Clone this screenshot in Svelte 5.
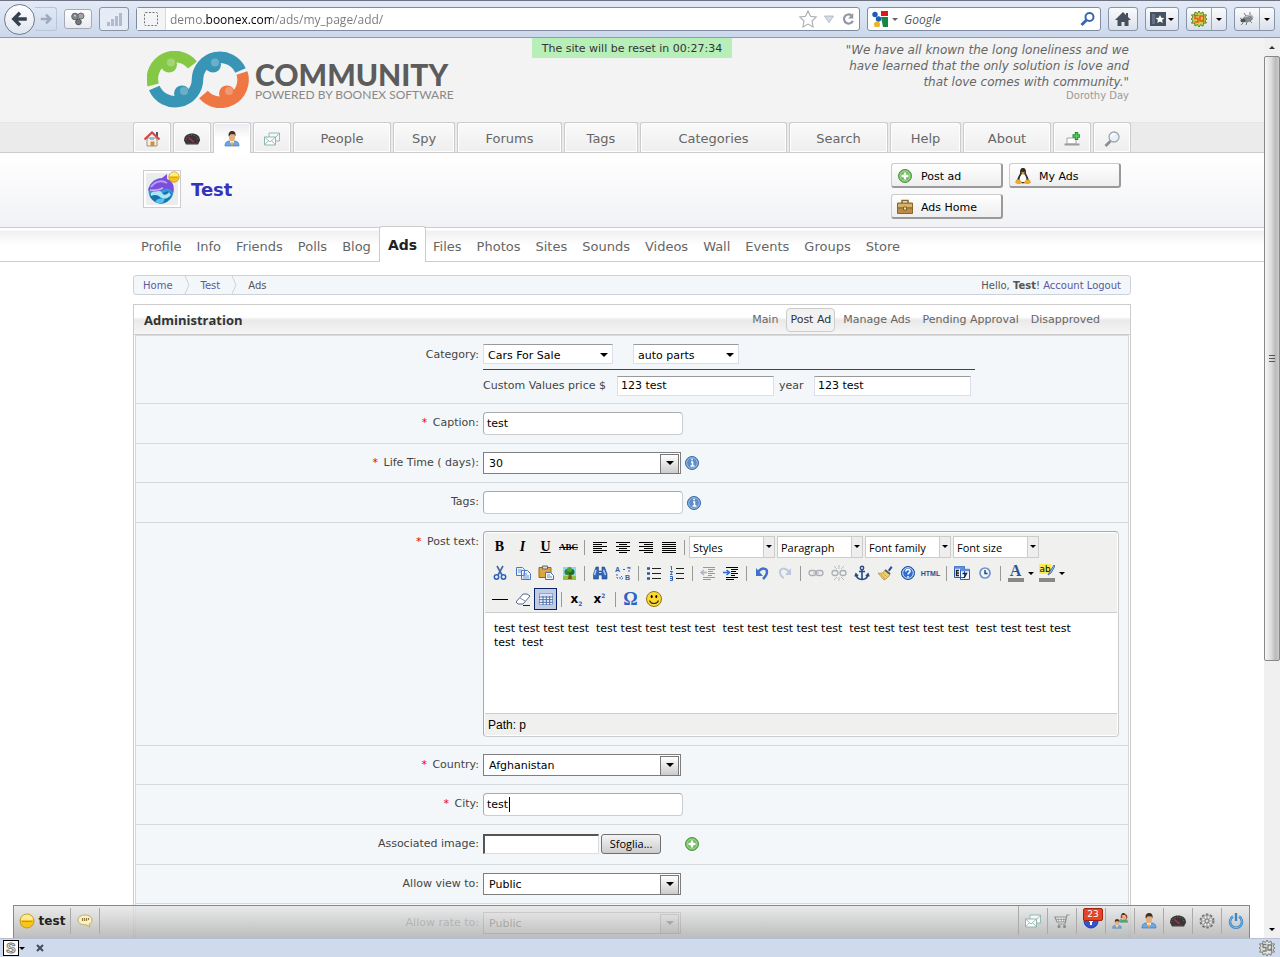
<script>
    const person = '<path d="M1 15c0-4 2-5 5-5h4c3 0 5 1 5 5z" fill="#6ea6e0" stroke="#4478b8" stroke-width=".7"/><path d="M6 9h4v2l-2 3-2-3z" fill="#fff"/><path d="M5 4v3c0 2 1.300 3.500 3 3.500S11 9 11 7V4z" fill="#e8ae79"/><path d="M4.700 5.500C4 1.500 6 0 8.200 0s4 1.500 3.200 5.500L10.500 3.500h-4z" fill="#4a2f1c"/><path d="M7.500 11h1l.5 3.500h-2z" fill="#e99a2c"/>';
    const mails = '<path d="M5 2h10.500v8H5z" fill="#f4faf9" stroke="#98b8b4"/><path d="M.5 6h11v8H.5z" fill="#fff" stroke="#8fb5b0"/><path d="M.5 6 6 11l5.500-5M.5 14l4-4.500m7 4.500-4-4.500M12 6l3.500-4" fill="none" stroke="#8fb5b0" stroke-width=".9"/>';
    const gauge = '<path d="M0 9.500C0 5 3.500 2.500 8 2.500S16 5 16 9.500L14 13.500H2z" fill="#3a3638"/><path d="M2 9a6 5 0 0 1 12 0" fill="none" stroke="#77787c" stroke-width="1" stroke-dasharray="1 1.500"/><path d="m4.500 6.500 5 4.500" stroke="#d02945" stroke-width="1.300"/><path d="M3 12.500h10" stroke="#68363f"/>';
    const add = '<circle cx="8" cy="8" r="6.500" fill="#69b956" stroke="#4f9246"/><circle cx="8" cy="8" r="5" fill="none" stroke="#a9dc9c"/><path d="M8 4.500v7M4.500 8h7" stroke="#fff" stroke-width="2.400"/>';
    const smile = '<circle cx="8" cy="8" r="7" fill="#f5c51e" stroke="#bd8a12" stroke-width=".8"/><path d="M2 7a6 5.500 0 0 1 12 0z" fill="#ffeb94"/><path d="M3 8.500h10" stroke="#ce9412"/>';
    const lines = (rows) => rows.map(([x, w], i) => `<path d="M${x} ${3 + i * 2}.500h${w}" stroke="#000"/>`).join('');
    const badge = '<path d="m8 0 1.500 2.500L12 1l.5 3 3-.2L14 6.500l2 1.500-2 1.500 1.500 2.500-3 .2-.5 3-2.500-1.500L8 16l-1.500-2.500L4 15l-.5-3-3 .2L2 9.500 0 8l2-1.500L.5 3.800l3 .2L4 1l2.500 1.500z"';

    const icons = {
        person, mails, gauge, add, smile,
        back: '<path d="M14 8H3M8 2.500 2.500 8 8 13.500" fill="none" stroke="#35414f" stroke-width="3"/>',
        forward: '<path d="M2 8h10M8 3l5 5-5 5" fill="none" stroke="#9fabbc" stroke-width="3"/>',
        dots: '<circle cx="5" cy="5.500" r="3.300" fill="#85898d" stroke="#5c5f63"/><circle cx="11" cy="5" r="3" fill="#a2a5a8" stroke="#6a6d70"/><circle cx="8.500" cy="11" r="2.800" fill="#77797c" stroke="#515356"/><path d="m4 4.500 2 .5" stroke="#ddd"/>',
        bars: '<path d="M2.500 15v-4M6.500 15V8M10.500 15V5M14.500 15V2" stroke="#aebbd0" stroke-width="3"/>',
        site: '<rect x="1.500" y="1.500" width="13" height="13" rx="1" fill="none" stroke="#70747b" stroke-dasharray="2 1.500"/>',
        star: '<path d="m8 .8 2.200 4.700 5.100.7-3.700 3.600.9 5.200L8 12.500 3.500 15l.9-5.200L.7 6.200l5.100-.7z" fill="#fff" stroke="#aaadb3"/>',
        drop: '<path d="M2 4h12L8 13z" fill="#d6dce6" stroke="#a5aebb"/>',
        reload: '<path d="M12 4a5.200 5.200 0 1 0 1.500 6" fill="none" stroke="#9299a5" stroke-width="2.500"/><path d="M14 1v6.500H8z" fill="#9299a5"/>',
        google: '<path d="M0 0h16v16H0z" fill="#fff"/><path d="M9 0h7v5H9z" fill="#dc1a1c"/><path d="M9 6h7v10h-5z" fill="#138a3e"/><circle cx="3" cy="3.500" r="2.700" fill="#1d5cb9"/><circle cx="6.500" cy="8" r="2.700" fill="#1d5cb9"/><circle cx="5" cy="13.500" r="3" fill="#edb523"/>',
        find: '<circle cx="9.500" cy="6" r="4" fill="none" stroke="#3a68ad" stroke-width="2"/><path d="m6.500 9-5 5" stroke="#3a68ad" stroke-width="3"/>',
        homeDark: '<path d="M8 1 0 9h2.500v6h4v-4h3v4h4V9H16l-3-3V2h-2v2z" fill="#47505d"/>',
        bookmark: '<path d="M0 1h16v14H0z" fill="#465363"/><path d="M2 3h3v10H2z" fill="#637183"/><path d="m10 4 1.300 2.700 3 .4-2.200 2 .6 3-2.700-1.500-2.700 1.500.6-3-2.200-2 3-.4z" fill="#fff"/>',
        sq: badge + ' fill="#c8d44e" stroke="#4f8a22"/><path d="M7.500 4.500H4v3h3v3.500H3.500M9 5h3.500v5H9zM11 9l2 2.500" fill="none" stroke="#e2571c" stroke-width="1.500"/>',
        sqGrey: badge + ' fill="#e3e5e0" stroke="#7b7f7a"/><path d="M7.500 4.500H4v3h3v3.500H3.500M9 5h3.500v5H9zM11 9l2 2.500" fill="none" stroke="#777b76" stroke-width="1.300"/>',
        bug: '<ellipse cx="9" cy="7.500" rx="5.500" ry="3.500" transform="rotate(-20 9 7.500)" fill="#85898a"/><ellipse cx="4" cy="9.500" rx="2.500" ry="2" fill="#4e5254"/><path d="M1 7l3 2m0 3-2 2m6-3-1 3m4-4 2 2M7 5 5 2m6 2V1" stroke="#5d6061" stroke-width=".8"/><path d="m6 6 6-2 2 3" fill="none" stroke="#c9cccd"/>',
        home: '<path d="M3 7h10v8H3z" fill="#f5f0e7" stroke="#a98d79"/><path d="M12 1h2v5h-2z" fill="#555"/><path d="M.5 8.500 8 1.500l7.500 7" fill="none" stroke="#d24747" stroke-width="2.300"/><path d="M6.500 10.500h4V15h-4z" fill="#c9943d"/><path d="M6 6.500h4v2.500H6z" fill="#8eb9ee"/>',
        join: '<path d="M3 7h9v6H3z" fill="#fff" stroke="#a3a6a9"/><path d="M.5 13.500h15" stroke="#999da0" stroke-width="2"/><path d="M12.500 1v8M8.500 5h8" stroke="#228d32" stroke-width="3.400"/><path d="M12.500 2v6M9.500 5h6" stroke="#54cf57" stroke-width="1.500"/>',
        lens: '<path d="m6.500 10-5 5" stroke="#8b8e95" stroke-width="2.800"/><circle cx="10" cy="6" r="5" fill="#e8f1fb" stroke="#a2a5ad" stroke-width="1.300"/><path d="M7 5.500a3.500 3.500 0 0 1 4-2.500" fill="none" stroke="#fff" stroke-width="1.500"/>',
        tux: '<path d="M5 5C5 1 6 0 8 0s3 1 3 5c0 2 3 4 2.500 8L8 15.500 2.500 13C2 9 5 7 5 5z" fill="#2e2e2e"/><path d="M6.500 6.500 8 5.500l1.500 1C12 10 12 13 10 14H6c-2-1-2-4 .5-7.500z" fill="#fff"/><path d="M6 4.500 8 4l2 .5L8 6.500zM1.500 12l3-.5L7 15l-4 1-2.500-1.500zM14.500 12l-3-.5L9 15l4 1 2.500-1.500z" fill="#f0ae25" stroke="#b87918" stroke-width=".4"/>',
        bag: '<path d="M5 4V1.500h6V4" fill="none" stroke="#8a6828" stroke-width="1.500"/><path d="M.5 4h15v10.500H.5z" fill="#b98d45" stroke="#8a652a"/><path d="M1 5h14v3H1z" fill="#d6b26b"/><path d="M1 9h14" stroke="#8a652a"/><path d="M6.500 8h3v3h-3z" fill="#f4e2a4" stroke="#81612b"/>',
        info: '<circle cx="8" cy="8" r="6.500" fill="#5b8ec9" stroke="#3c6ca3"/><circle cx="8" cy="8" r="5.300" fill="none" stroke="#a8c6e8" stroke-width=".8"/><path d="M7 7h1.500v4M6.500 11h4M7.300 4.500h1.600" fill="none" stroke="#fff" stroke-width="1.500"/>',
        alignLeft: lines([[1, 14], [1, 9], [1, 14], [1, 9], [1, 14], [1, 9]]),
        alignCenter: lines([[1, 14], [4, 8], [1, 14], [4, 8], [1, 14], [4, 8]]),
        alignRight: lines([[1, 14], [6, 9], [1, 14], [6, 9], [1, 14], [6, 9]]),
        justify: lines([[1, 14], [1, 14], [1, 14], [1, 14], [1, 14], [1, 14]]),
        cut: '<path d="m5 1 5 9M11 1l-5 9" stroke="#44679e" stroke-width="1.600"/><circle cx="4.500" cy="12" r="2.200" fill="none" stroke="#2b5fc0" stroke-width="1.500"/><circle cx="11.500" cy="12" r="2.200" fill="none" stroke="#2b5fc0" stroke-width="1.500"/>',
        copy: '<path d="M1.500 2.500h6l2 2v6h-8zM6.500 5.500h6l3 3v6h-9z" fill="#e9f1ff" stroke="#4c78c2"/><path d="M3 5h4M3 7h3M8 9h4M8 11h6M8 13h6" stroke="#6e97d8"/>',
        paste: '<path d="M1 2.500h12v10H1z" fill="#dfa63b" stroke="#8e6828"/><path d="M4.500 1h5v3h-5z" fill="#d9d9d9" stroke="#666"/><path d="M7.500 7.500h5l3 3v4h-8z" fill="#f2f6ff" stroke="#526d9b"/><path d="M9 10h3M9 12h5" stroke="#7090c4"/>',
        image: '<path d="M2 2h13v13H2z" fill="#8fd5f4"/><path d="M2 11h13v4H2z" fill="#8cc63f"/><path d="M8 8h2l1 6H7z" fill="#815123"/><circle cx="6.500" cy="7" r="3" fill="#318323"/><circle cx="10.500" cy="7" r="3" fill="#256d1c"/><circle cx="8.500" cy="4.500" r="2.500" fill="#49a82d"/>',
        search: '<path d="M4 2h2.500v4H10V2h2.500l2.500 7v5h-5v-4H6.500v4h-5V9z" fill="#3565b2" stroke="#1f4487" stroke-width=".6"/><path d="m4 5-1.500 5M11.500 5l2 5" stroke="#b4d0f5" stroke-width="1.500"/><path d="M7 7.500h2.500" stroke="#c6daf4"/>',
        undo: '<path d="M4 7c4-5 9-4 9 0 0 3-2 5-4 7" fill="none" stroke="#3f70ce" stroke-width="2.500"/><path d="M2 3v8h7z" fill="#3f70ce"/>',
        redo: '<path d="M12 7C8 2 3 3 3 7c0 3 2 5 4 6" fill="none" stroke="#bcc9dc" stroke-width="2"/><path d="M14 3v7H8z" fill="#bcc9dc"/>',
        bullets: '<path d="M6 3.500h9M6 8.500h9M6 13.500h9" stroke="#222"/><path d="M1 3.500h3M1 8.500h3M1 13.500h3" stroke="#285a9c" stroke-width="2.500"/>',
        numbers: '<path d="M7 3.500h8M7 8.500h8M7 13.500h8" stroke="#222"/><path d="M1.500 1.500h1V5M1 6.500h2.500l-2 3h2M1 11.500h2.500v4H1m0-2h2" fill="none" stroke="#2d60ba"/>',
        outdent: '<path d="M3 2.500h12M8 4.500h7M8 6.500h5M8 8.500h7M8 10.500h4M3 12.500h12M3 14.500h8" stroke="#999"/><path d="M7 7.500H1M4 5 1 7.500 4 10" fill="none" stroke="#aab1c1" stroke-width="1.300"/>',
        indent: '<path d="M3 2.500h12M8 4.500h7M8 6.500h5M8 8.500h7M8 10.500h4M3 12.500h12M3 14.500h8" stroke="#000"/><path d="M0 7.500h6M3.500 5l3 2.500-3 2.500" fill="none" stroke="#2e69cc" stroke-width="1.500"/>',
        link: '<rect x="1" y="5.500" width="7" height="5" rx="2.500" fill="none" stroke="#aaaeb5" stroke-width="1.300"/><rect x="8" y="5.500" width="7" height="5" rx="2.500" fill="none" stroke="#aaaeb5" stroke-width="1.300"/><path d="M5 8h6" stroke="#aaaeb5"/>',
        unlink: '<rect x="1" y="5.500" width="6" height="5" rx="2.500" fill="none" stroke="#aaaeb5" stroke-width="1.300"/><rect x="9" y="5.500" width="6" height="5" rx="2.500" fill="none" stroke="#aaaeb5" stroke-width="1.300"/><path d="M8 0v4M8 12v4M3 1l3 3M13 1l-3 3M3 15l3-3M13 15l-3-3" stroke="#b7bbc1"/>',
        anchor: '<circle cx="8" cy="3" r="1.700" fill="none" stroke="#244a87" stroke-width="1.400"/><path d="M8 5v9M5 6.500h6M2 9c.5 4 3 5.500 6 5.500s5.500-1.500 6-5.500M1 11.500 2 9l2 2M15 11.500 14 9l-2 2" fill="none" stroke="#244a87" stroke-width="1.600"/>',
        clean: '<path d="m11 5 3-4 1.500 1.500-3 4z" fill="#294f9c"/><path d="M1 8c4 1 6-1 7-3l5 4c-1 3-4 5-6 6z" fill="#f2d268" stroke="#a9842b" stroke-width=".7"/><path d="m8 5 5 4" stroke="#525d74" stroke-width="2"/><path d="m4 9 4 5M6 8l4 4" stroke="#b9923d" stroke-width=".7"/>',
        help: '<circle cx="8" cy="8" r="6.500" fill="#2f6ed0" stroke="#1f4f9e"/><circle cx="8" cy="8" r="5.300" fill="none" stroke="#cfe1fa"/><path d="M5.800 6.500C6 3.500 10.500 4 10 6.500 9.800 8 8 7.800 8 9.500M8 11v1.600" fill="none" stroke="#fff" stroke-width="1.600"/>',
        date: '<path d="M.5 1.500h10v11H.5zM6.500 4.500h9v10h-9z" fill="#f2f6ff" stroke="#2e5aa9"/><path d="M.5 2.500h10M6.500 5h9" stroke="#5c8dde" stroke-width="2.500"/><path d="M5 5.500H2.500v5H5M2.500 8H5M8.500 8.500h4L10 13" fill="none" stroke="#222" stroke-width="1.400"/>',
        time: '<circle cx="8" cy="8" r="5" fill="#edf4ff" stroke="#6e94cd" stroke-width="1.700"/><path d="M8 5v3.500h2.500" fill="none" stroke="#1f3e78" stroke-width="1.400"/>',
        hr: '<path d="M0 8.500h16" stroke="#000"/>',
        erase: '<path d="m1 11 7-8h4l3 2-7 8H3z" fill="#fff" stroke="#516890"/><path d="m5 7 5 3" stroke="#7d90af"/><path d="M8 14.500h7" stroke="#222"/>',
        table: '<path d="M1.500 2.500h13v11h-13z" fill="#fff" stroke="#466aa8" stroke-dasharray="1 1"/><path d="M1 6h14M1 8.700h14M1 11.300h14M5 3v11M8.300 3v11M11.700 3v11" stroke="#466aa8"/><path d="M2 3h12v2H2z" fill="#d4e2fb"/>',
        face: '<circle cx="8" cy="8" r="7.500" fill="#fbd92d" stroke="#92711c"/><ellipse cx="5.700" cy="5.500" rx="1" ry="1.600"/><ellipse cx="10.300" cy="5.500" rx="1" ry="1.600"/><path d="M3.500 9.500c1.500 4 7.500 4 9 0" fill="none" stroke="#3b2c08" stroke-width="1.100"/>',
        bubble: '<path d="M8 2c4 0 7 2 7 5 0 2-1 3.500-3 4.200L13 14l-4-2.200C4 12 1 10 1 7s3-5 7-5z" fill="#fdf0bb" stroke="#b9a468" stroke-width=".9"/><path d="M5.500 5v3M7.500 5v3M9.500 5v3M11.500 5v2" fill="none" stroke="#8b7a4c" stroke-width="1.200"/>',
        cart: '<path d="M15.500 2H13l-2 9H4M1 4h11.500L11 9H3z" fill="#f1f1f1" stroke="#919191" stroke-width="1.200"/><path d="M4 4.500 5 9m2-4.500L7.500 9M10 4.500 9.500 9M1.500 6.500h10" stroke="#969696" stroke-width=".8"/><circle cx="5" cy="13.500" r="1.500" fill="#888"/><circle cx="10.500" cy="13.500" r="1.500" fill="#888"/>',
        ball: '<circle cx="8" cy="8" r="7" fill="#3153cf" stroke="#1f3aa4"/><path d="M8 7v5M6 8h4" stroke="#fff" stroke-width="2"/>',
        friends: `<g transform="translate(6.500 0) scale(.6)">${person}</g><path d="M13.500 1.500c2 1.500 1 3 1 4M9.500 2.500V5" stroke="#a3402e" stroke-width="1.500"/><path d="M8 9.500c0-4 7-4 8 0z" fill="#50a858"/><g transform="translate(0 6) scale(.62)">${person}</g>`,
        gear: '<circle cx="8" cy="8" r="6.500" fill="none" stroke="#777" stroke-width="2" stroke-dasharray="2.500 1.600"/><circle cx="8" cy="8" r="5.500" fill="#eee" stroke="#888" stroke-width=".8"/><path d="M8 3v10M3 8h10M4.500 4.500l7 7M11.500 4.500l-7 7" stroke="#999" stroke-width="1.200"/><circle cx="8" cy="8" r="2" fill="#ddd" stroke="#777"/>',
        power: '<path d="M5 3.500a6 6 0 1 0 6 0" fill="none" stroke="#3a86c8" stroke-width="2.600"/><path d="M8 0v8" stroke="#3a86c8" stroke-width="2.400"/><path d="M5 3.500a6 6 0 1 0 6 0" fill="none" stroke="#7fbdf0" stroke-width="1"/>'
    };

    // weight is the share of the bar that the tab takes
    const menu = [
        { icon: 'home', title: 'Home', weight: 36 },
        { icon: 'gauge', title: 'Dashboard', weight: 36 },
        { icon: 'person', title: 'My profile', weight: 36, active: true },
        { icon: 'mails', title: 'Mail', weight: 36 },
        { title: 'People', weight: 96 },
        { title: 'Spy', weight: 60 },
        { title: 'Forums', weight: 103 },
        { title: 'Tags', weight: 72 },
        { title: 'Categories', weight: 145 },
        { title: 'Search', weight: 97 },
        { title: 'Help', weight: 69 },
        { title: 'About', weight: 86 },
        { icon: 'join', title: 'Join', weight: 36 },
        { icon: 'lens', title: 'Find', weight: 36 }
    ];
    const submenu = ['Profile', 'Info', 'Friends', 'Polls', 'Blog', 'Ads', 'Files', 'Photos', 'Sites', 'Sounds', 'Videos', 'Wall', 'Events', 'Groups', 'Store'];
    const adminTabs = ['Main', 'Post Ad', 'Manage Ads', 'Pending Approval', 'Disapproved'];
    const formats = ['Styles', 'Paragraph', 'Font family', 'Font size'];
    const toolsTwo = ['cut', 'copy', 'paste', 'image', '|', 'search', 'replace', '|', 'bullets', 'numbers', '|', 'outdent', 'indent', '|', 'undo', 'redo', '|', 'link', 'unlink', 'anchor', 'clean', 'help', 'html', '|', 'date', 'time', '|'];
    const toolsThree = ['hr', 'erase', 'table', '|', 'sub', 'sup', '|', 'omega', 'face'];
    const dock = ['mails', 'cart', 'ball', 'friends', 'person', 'gauge', 'gear', 'power'];

    let url = 'demo.boonex.com/ads/my_page/add/';
    let caption = 'test';
    let tags = '';
    let city = 'test';
    let price = '123 test';
    let year = '123 test';
    let file = '';
    let text = 'test test test test  test test test test test  test test test test test  test test test test test  test test test test test  test';
</script>

{#snippet icon(name, size = 16)}
    <svg class="icon" viewBox="0 0 16 16" width={size} height={size} aria-hidden="true">{@html icons[name]}</svg>
{/snippet}

{#snippet tool(name)}
    {#if name === '|'}
        <span class="sep"></span>
    {:else}
        <button class="tool" class:on={name === 'table'} type="button" aria-label={name}>
            {#if name === 'html'}
                <span class="html">HTML</span>
            {:else if name === 'sub'}
                <b class="script">x<sub>2</sub></b>
            {:else if name === 'sup'}
                <b class="script">x<sup>2</sup></b>
            {:else if name === 'omega'}
                <b class="omega">Ω</b>
            {:else if name === 'replace'}
                <svg class="icon" viewBox="0 0 16 16" width="16" height="16">
                    <text x="0" y="7" class="tiny">A</text>
                    <text x="10" y="15" class="tiny">B</text>
                    <path d="M8 4.500h3M14 2v5M12 3l3-1v3M2 9v4h5M6 11l2 2-2 2" fill="none" stroke="#2e63c4" stroke-dasharray="2 1" />
                </svg>
            {:else}
                {@render icon(name)}
            {/if}
        </button>
    {/if}
{/snippet}

{#snippet bigSelect(id, value)}
    <span class="select big">
        <select {id}><option>{value}</option></select>
    </span>
{/snippet}

<div class="window">
    <header class="chrome">
        <div class="history">
            <button class="back" type="button" aria-label="Back">{@render icon('back', 18)}</button>
            <button class="forward" type="button" aria-label="Forward">{@render icon('forward', 14)}</button>
        </div>
        <button class="chrome-button low" type="button" aria-label="Network">{@render icon('dots')}</button>
        <button class="chrome-button faint" type="button" aria-label="Rank">{@render icon('bars')}</button>
        <div class="address">
            <span class="identity">{@render icon('site')}</span>
            <input aria-label="Address" bind:value={url} />
            {@render icon('star', 18)}
            {@render icon('drop', 12)}
            {@render icon('reload', 14)}
        </div>
        <div class="finder">
            {@render icon('google')}
            <span class="arrow grey"></span>
            <input aria-label="Search the web" placeholder="Google" />
            {@render icon('find')}
        </div>
        <button class="chrome-button" type="button" aria-label="Home page">{@render icon('homeDark')}</button>
        <button class="chrome-button wide" type="button" aria-label="Bookmarks">{@render icon('bookmark')}<span class="arrow"></span></button>
        <button class="chrome-button split" type="button" aria-label="Seo tool">{@render icon('sq')}<i></i><span class="arrow"></span></button>
        <button class="chrome-button split" type="button" aria-label="Debugger">{@render icon('bug')}<i></i><span class="arrow"></span></button>
    </header>

    <div class="view">
        <div class="page">
            <div class="top">
                <div class="wrap head">
                    <a class="logo" href="/">
                        <svg viewBox="0 0 102 57" width="102" height="57" aria-hidden="true">
                            <g fill="none" stroke-width="11.500">
                                <path d="M6.200 34A22.500 22.500 0 0 1 45.500 14" stroke="#85c845" />
                                <path d="M56.500 43.500A22.500 22.500 0 0 0 95 22" stroke="#ee7744" />
                                <path d="M7.300 37A22.500 22.500 0 0 0 50.500 28A22.500 22.500 0 0 1 93.500 19.500" stroke="#f3f3f3" stroke-width="14.500" />
                                <path d="M7.300 37A22.500 22.500 0 0 0 50.500 28A22.500 22.500 0 0 1 93.500 19.500" stroke="#3995b5" />
                            </g>
                            <circle cx="22" cy="13.500" r="8" fill="#85c845" />
                            <circle cx="66" cy="13.500" r="8" fill="#3995b5" />
                            <circle cx="35" cy="42.500" r="8" fill="#3995b5" />
                            <circle cx="80" cy="42.500" r="8" fill="#ee7744" />
                            <g fill="#fff" opacity=".25">
                                <circle cx="24" cy="11.500" r="4" /><circle cx="68" cy="11.500" r="4" />
                                <circle cx="37" cy="40" r="4" /><circle cx="82" cy="40" r="4" />
                            </g>
                        </svg>
                        <span>
                            <strong>COMMUNITY</strong>
                            <small>POWERED BY BOONEX SOFTWARE</small>
                        </span>
                    </a>
                    <div class="reset">The site will be reset in 00:27:34</div>
                    <blockquote>
                        "We have all known the long loneliness and we have learned that the only solution is love and that love comes with community."
                        <cite>Dorothy Day</cite>
                    </blockquote>
                </div>
            </div>

            <div class="menu">
                <nav class="wrap">
                    {#each menu as item}
                        <a href="/{item.title}" class:active={item.active} style="flex-grow: {item.weight}" aria-label={item.title}>
                            {#if item.icon}
                                {@render icon(item.icon)}
                            {:else}
                                {item.title}
                            {/if}
                        </a>
                    {/each}
                </nav>
            </div>

            <div class="profile">
                <div class="wrap">
                    <span class="avatar">
                        <svg viewBox="0 0 32 32" width="32" height="32" aria-hidden="true">
                            <path d="M0 0h32v32H0z" fill="#ececec" />
                            <circle cx="15" cy="18" r="12.500" fill="#2f9fd5" />
                            <path d="M4 23c5-5 9-1 13-3s6-3 9 1c-2 7-7 9.500-11 9.500S6 28 4 23z" fill="#1673ae" />
                            <path d="M5 20c5-4 9-3 11 0 2 3 5 2 7-1l2 3c-3 4-8 5-11 2-2-2-5-3-9-1z" fill="#a9e4f7" />
                            <path d="M9 29c2-4 6-4 9-3 1 1 0 3-2 4-3 .5-5 0-7-1z" fill="#55c3ec" />
                            <path d="M2 17C4 9 11 5 16 5l5-4 0 5c6 2 8 8 6 14-2-4-5-5-8-4-4 2-12 4-17 1z" fill="#7a4fdc" />
                            <path d="M5 14c4-6 11-7 16-4" fill="none" stroke="#bb9cf2" stroke-width="2" />
                            <path d="M4 17c5 1 9 0 13-2" fill="none" stroke="#c9b7f2" stroke-width="1.500" />
                        </svg>
                        <span class="status">{@render icon('smile', 12)}</span>
                    </span>
                    <h1>Test</h1>
                    <div class="actions">
                        <button type="button">{@render icon('add')}Post ad</button>
                        <button type="button">{@render icon('tux')}My Ads</button>
                        <button type="button">{@render icon('bag')}Ads Home</button>
                    </div>
                </div>
            </div>

            <div class="submenu">
                <nav class="wrap">
                    {#each submenu as item}
                        <a href="/profile/{item}" class:active={item === 'Ads'}>{item}</a>
                    {/each}
                </nav>
            </div>

            <main class="wrap">
                <div class="crumbs">
                    <a href="/">Home</a>
                    <svg viewBox="0 0 6 18" width="6" height="18" aria-hidden="true"><path d="M1 0l4 9-4 9" fill="none" stroke="#ccd2dc" /></svg>
                    <a href="/test">Test</a>
                    <svg viewBox="0 0 6 18" width="6" height="18" aria-hidden="true"><path d="M1 0l4 9-4 9" fill="none" stroke="#ccd2dc" /></svg>
                    <span>Ads</span>
                    <p>Hello, <b>Test</b>! <a href="/account">Account</a> <a href="/logout">Logout</a></p>
                </div>

                <section class="box">
                    <div class="box-head">
                        <h2>Administration</h2>
                        <nav>
                            {#each adminTabs as item}
                                <a href="/ads/{item}" class:active={item === 'Post Ad'}>{item}</a>
                            {/each}
                        </nav>
                    </div>

                    <form>
                        <div class="row">
                            <label for="category">Category:</label>
                            <div class="stack">
                                <div class="line pair">
                                    <span class="select small"><select id="category"><option>Cars For Sale</option></select></span>
                                    <span class="select small narrow"><select aria-label="Subcategory"><option>auto parts</option></select></span>
                                </div>
                                <div class="line custom">
                                    <label class="price" for="price">Custom Values price $</label>
                                    <input id="price" bind:value={price} />
                                    <label class="year" for="year">year</label>
                                    <input id="year" bind:value={year} />
                                </div>
                            </div>
                        </div>
                        <div class="row">
                            <label for="caption"><em>*</em> Caption:</label>
                            <div class="line"><input class="field" id="caption" bind:value={caption} /></div>
                        </div>
                        <div class="row">
                            <label for="life"><em>*</em> Life Time ( days):</label>
                            <div class="line">{@render bigSelect('life', '30')}{@render icon('info')}</div>
                        </div>
                        <div class="row">
                            <label for="tags">Tags:</label>
                            <div class="line"><input class="field" id="tags" bind:value={tags} />{@render icon('info')}</div>
                        </div>
                        <div class="row">
                            <label for="text"><em>*</em> Post text:</label>
                            <div class="editor">
                                <div class="toolbar">
                                    <div class="tools">
                                        <button class="tool letter" type="button"><b>B</b></button>
                                        <button class="tool letter" type="button"><i>I</i></button>
                                        <button class="tool letter" type="button"><u>U</u></button>
                                        <button class="tool letter abc" type="button"><s>ABC</s></button>
                                        <span class="sep"></span>
                                        {#each ['alignLeft', 'alignCenter', 'alignRight', 'justify'] as name}
                                            {@render tool(name)}
                                        {/each}
                                        <span class="sep"></span>
                                        {#each formats as item}
                                            <span class="select format"><select aria-label={item}><option>{item}</option></select></span>
                                        {/each}
                                    </div>
                                    <div class="tools">
                                        {#each toolsTwo as name}
                                            {@render tool(name)}
                                        {/each}
                                        <button class="tool colour" type="button" aria-label="Text colour"><b>A</b></button><span class="arrow"></span>
                                        <button class="tool colour mark" type="button" aria-label="Highlight">
                                            <span>ab</span>
                                            <svg viewBox="0 0 8 12" width="8" height="12" aria-hidden="true"><path d="m7 1-5 8-1 2 3-2 4-7z" fill="#9fbceb" stroke="#345a9f" stroke-width=".8" /></svg>
                                        </button><span class="arrow"></span>
                                    </div>
                                    <div class="tools">
                                        {#each toolsThree as name}
                                            {@render tool(name)}
                                        {/each}
                                    </div>
                                </div>
                                <textarea id="text" spellcheck="false" bind:value={text}></textarea>
                                <div class="path">Path: p</div>
                            </div>
                        </div>
                        <div class="row">
                            <label for="country"><em>*</em> Country:</label>
                            <div class="line">{@render bigSelect('country', 'Afghanistan')}</div>
                        </div>
                        <div class="row">
                            <label for="city"><em>*</em> City:</label>
                            <div class="line"><span class="caret"><input class="field" id="city" bind:value={city} /></span></div>
                        </div>
                        <div class="row">
                            <label for="image">Associated image:</label>
                            <div class="line upload">
                                <input id="image" readonly bind:value={file} />
                                <button class="browse" type="button">Sfoglia...</button>
                                <button class="more" type="button" aria-label="Add image">{@render icon('add')}</button>
                            </div>
                        </div>
                        <div class="row">
                            <label for="view">Allow view to:</label>
                            <div class="line">{@render bigSelect('view', 'Public')}</div>
                        </div>
                        <div class="row">
                            <label for="rate">Allow rate to:</label>
                            <div class="line">{@render bigSelect('rate', 'Public')}</div>
                        </div>
                    </form>
                </section>
            </main>

            <div class="dock">
                <button class="who" type="button">{@render icon('smile')}test</button>
                <button class="say" type="button" aria-label="Status message">{@render icon('bubble')}</button>
                <div class="dock-icons">
                    {#each dock as name}
                        <button type="button" aria-label={name}>
                            {@render icon(name)}
                            {#if name === 'ball'}<span class="count">23</span>{/if}
                        </button>
                    {/each}
                </div>
            </div>
        </div>

        <div class="scrollbar">
            <button type="button" aria-label="Scroll up"><span class="arrow up"></span></button>
            <div class="track"><div class="thumb"></div></div>
            <button type="button" aria-label="Scroll down"><span class="arrow"></span></button>
        </div>
    </div>

    <footer class="addons">
        <button class="script-block" type="button">S</button>
        <span class="arrow"></span>
        <button class="close" type="button" aria-label="Close bar">
            <svg viewBox="0 0 8 8" width="8" height="8"><path d="m1 1 6 6M7 1 1 7" stroke="#434b57" stroke-width="2" /></svg>
        </button>
        <span class="seo">{@render icon('sqGrey')}</span>
    </footer>
</div>

<style>
    :global(body) {
        margin: 0;
    }

    .window {
        display: flex;
        flex-direction: column;
        height: 100vh;
        overflow: hidden;
        font-family: 'DejaVu Sans', sans-serif;
        font-size: 11px;
        color: #444;
        background: #fff;
    }

    .window * {
        box-sizing: border-box;
    }

    button, input, select, textarea {
        font: inherit;
        color: #000;
        margin: 0;
        padding: 0;
        border: none;
        border-radius: 0;
        background: none;
        outline: none;
    }

    a {
        color: inherit;
        text-decoration: none;
    }

    .icon {
        display: block;
        flex: none;
    }

    .arrow {
        flex: none;
        width: 0;
        height: 0;
        border: 3px solid transparent;
        border-top-color: #000;
        border-bottom: none;
    }

    .arrow.grey {
        border-top-color: #666;
    }

    .arrow.up {
        border-top: none;
        border-bottom: 3px solid #333;
    }

    /* browser bar */
    .chrome {
        display: flex;
        flex: none;
        align-items: center;
        gap: 7px;
        height: 38px;
        padding: 0 5px 0 4px;
        border-top: 1px solid #6c7183;
        border-bottom: 1px solid #8d9bb0;
        background: linear-gradient(#e3eaf6, #cbd8eb);
        font-family: 'Open Sans', sans-serif;
        font-size: 12px;
    }

    .history {
        display: flex;
        align-items: center;
    }

    .back {
        display: flex;
        align-items: center;
        justify-content: center;
        width: 31px;
        height: 31px;
        border: 1px solid #707a8b;
        border-radius: 50%;
        background: linear-gradient(#fff, #dfe5ef);
    }

    .forward {
        display: flex;
        align-items: center;
        justify-content: center;
        width: 22px;
        height: 24px;
        border: 1px solid #bac5d6;
        border-left: none;
        border-radius: 0 3px 3px 0;
    }

    .chrome-button {
        display: flex;
        flex: none;
        align-items: center;
        justify-content: center;
        width: 30px;
        height: 24px;
        border: 1px solid #8793a6;
        border-radius: 3px;
        background: linear-gradient(#fafbfd, #d9e0eb);
    }

    .chrome-button.low {
        width: 28px;
        height: 20px;
        border-color: #a2aab7;
        background: linear-gradient(#fff, #e9ebef);
    }

    .chrome-button.faint {
        background: #e6ecf6;
    }

    .chrome-button.wide {
        width: 34px;
        gap: 2px;
    }

    .chrome-button.split {
        width: 41px;
        gap: 4px;
    }

    .split i {
        width: 1px;
        height: 22px;
        background: #9da8b9;
    }

    .address, .finder {
        display: flex;
        align-items: center;
        height: 24px;
        border: 1px solid #7f8b9e;
        border-radius: 3px;
        background: #fff;
    }

    .address {
        flex: 1;
        gap: 6px;
        padding-right: 4px;
    }

    .identity {
        display: flex;
        align-items: center;
        justify-content: center;
        width: 29px;
        height: 22px;
        margin-right: -2px;
        border-right: 1px solid #d5d9e0;
        background: #f3f4f6;
    }

    .address input {
        flex: 1;
        height: 22px;
        color: transparent;
        background: linear-gradient(90deg, #777 34px, #000 34px, #000 102px, #777 102px) text;
    }

    .finder {
        width: 234px;
        gap: 4px;
        padding: 0 4px;
    }

    .finder input {
        flex: 1;
        min-width: 0;
        padding-left: 2px;
    }

    .finder input::placeholder {
        color: #555;
        font-style: italic;
    }

    /* page */
    .view {
        display: flex;
        flex: 1;
        min-height: 0;
    }

    .page {
        position: relative;
        flex: 1;
        overflow: hidden;
    }

    .wrap {
        max-width: 998px;
        margin: 0 auto;
    }

    .top {
        background: #f3f3f3;
    }

    .head {
        display: grid;
        grid-template-columns: 1fr auto 1fr;
        align-items: start;
        height: 84px;
    }

    .logo {
        display: flex;
        gap: 6px;
        padding: 13px 0 0 14px;
    }

    .logo span {
        display: flex;
        flex-direction: column;
        padding-top: 8px;
        font-family: Lato, sans-serif;
    }

    .logo strong {
        font-size: 30px;
        font-weight: 900;
        line-height: 30px;
        color: #5c5c5c;
    }

    .logo small {
        font-size: 12px;
        line-height: 12px;
        color: #888;
    }

    .reset {
        padding: 1px 10px 0;
        line-height: 19px;
        color: #333;
        background: #b8eeb8;
        white-space: nowrap;
    }

    blockquote {
        justify-self: end;
        width: 300px;
        margin: 0;
        padding: 4px 2px 0 0;
        font-size: 12px;
        font-style: italic;
        line-height: 16px;
        text-align: right;
        color: #666;
    }

    cite {
        display: block;
        font-size: 10px;
        font-style: normal;
        line-height: 12px;
        color: #999;
    }

    .menu {
        border-top: 1px solid #e6e6e6;
        border-bottom: 1px solid #ccc;
        background: #ebebeb;
    }

    .menu nav {
        display: flex;
        gap: 2px;
        height: 30px;
        margin-top: -1px;
    }

    .menu a {
        display: flex;
        flex-basis: 0;
        align-items: center;
        justify-content: center;
        padding-top: 2px;
        border: 1px solid #ccc;
        border-bottom: none;
        border-radius: 3px 3px 0 0;
        font-size: 13px;
        color: #666;
        background: linear-gradient(#fafafa, #eee);
        box-shadow: inset 0 0 0 1px #fff;
    }

    .menu a.active {
        margin-bottom: -1px;
        background: linear-gradient(#e9e9f1, #fff 50%);
    }

    .profile {
        background: linear-gradient(#fff, #f1f2f5);
    }

    .profile .wrap {
        display: flex;
        align-items: flex-start;
        height: 74px;
        padding: 10px;
    }

    .avatar {
        position: relative;
        margin-top: 7px;
        padding: 2px;
        border: 1px solid #ccc;
        background: #fff;
        line-height: 0;
    }

    .status {
        position: absolute;
        top: 0;
        right: 0;
    }

    h1 {
        flex: 1;
        margin: 15px 0 0 10px;
        font-size: 18px;
        line-height: 24px;
        color: #33b;
    }

    .actions {
        display: grid;
        grid-template-columns: 112px 112px;
        gap: 6px;
    }

    .actions button {
        display: flex;
        align-items: center;
        gap: 8px;
        height: 25px;
        padding: 2px 0 0 5px;
        border: 1px solid #ccc;
        border-right: 2px solid #999;
        border-bottom: 2px solid #999;
        border-radius: 3px;
        background: linear-gradient(#fff, #eee);
    }

    .submenu {
        border-top: 1px solid #ccc;
        border-bottom: 1px solid #ccc;
        background: linear-gradient(#fff 2px, #f0f0f0 3px, #fff 18px);
    }

    .submenu nav {
        display: flex;
        height: 33px;
        padding-left: 1px;
    }

    .submenu a {
        padding: 0 8px 0 7px;
        font-size: 13px;
        line-height: 37px;
        color: #666;
    }

    .submenu a.active {
        margin: -2px 0 -1px;
        padding: 0 8px;
        border: 1px solid #ccc;
        border-bottom: none;
        border-radius: 3px 3px 0 0;
        font-size: 14px;
        font-weight: bold;
        color: #222;
        background: #fff;
    }

    .crumbs {
        display: flex;
        align-items: center;
        height: 20px;
        margin-top: 13px;
        padding: 0 9px;
        gap: 11px;
        border: 1px solid #ccd2dc;
        border-radius: 3px;
        font-size: 10px;
        color: #555;
        background: #f3f7fa;
    }

    .crumbs a {
        color: #5a5aa0;
    }

    .crumbs p {
        margin: 0 0 0 auto;
    }

    .box {
        margin-top: 9px;
        border: 1px solid #ccc;
    }

    .box-head {
        display: flex;
        align-items: center;
        justify-content: space-between;
        height: 30px;
        padding: 0 26px 0 10px;
        border-bottom: 1px solid #ccc;
        background: linear-gradient(#fff 12px, #e9e9e9 15px, #f6f6f6);
    }

    h2 {
        margin: 0;
        font-family: 'Open Sans', sans-serif;
        font-size: 13px;
        color: #333;
    }

    .box-head nav {
        display: flex;
        gap: 4px;
        line-height: 22px;
        color: #666;
    }

    .box-head a {
        padding: 0 3px;
        border: 1px solid transparent;
    }

    .box-head a.active {
        border-color: #ccc;
        border-radius: 4px;
        color: #333;
        background: #f2f2f2;
    }

    form {
        margin: 0 1px;
        border: 1px solid #d6dadd;
        background: #f3f7fa;
    }

    .row {
        display: grid;
        grid-template-columns: 343px 1fr;
        gap: 4px;
        padding: 8px 9px 8px 0;
        border-bottom: 1px solid #d6dadd;
        line-height: 22px;
    }

    .row > label {
        text-align: right;
    }

    em {
        margin-right: 2px;
        font-style: normal;
        color: #e00;
    }

    .line {
        display: flex;
        align-items: center;
        gap: 3px;
    }

    .field {
        width: 200px;
        height: 23px;
        padding: 0 3px;
        border: 1px solid #ccc;
        border-color: #aaa #ccc #ccc #aaa;
        border-radius: 4px;
        background: #fff;
    }

    .caret {
        position: relative;
        line-height: 0;
    }

    .caret::after {
        content: '';
        position: absolute;
        top: 4px;
        left: 26px;
        width: 1px;
        height: 15px;
        background: #000;
    }

    .select {
        position: relative;
        display: flex;
        background: #fff;
    }

    .select select {
        width: 100%;
        height: 100%;
        appearance: none;
    }

    .select::after {
        content: '';
        position: absolute;
        top: 8px;
        right: 4px;
        border: 4px solid transparent;
        border-top-color: #000;
        border-bottom: none;
        pointer-events: none;
    }

    .big {
        width: 198px;
        height: 22px;
        border: 1px solid #7f7f7f;
    }

    .big select {
        padding-left: 5px;
    }

    .big::before {
        content: '';
        position: absolute;
        top: 1px;
        right: 1px;
        width: 17px;
        height: 18px;
        border: 1px solid #777;
        background: linear-gradient(#fff, #ccc);
        pointer-events: none;
    }

    .big::after {
        right: 6px;
    }

    .small {
        width: 130px;
        height: 20px;
        border: 1px solid #dde;
        border-top-color: #999;
    }

    .small.narrow {
        width: 106px;
    }

    .small select {
        padding-left: 4px;
    }

    .stack {
        width: 492px;
    }

    .pair {
        gap: 20px;
        padding-bottom: 5px;
        border-bottom: 1px solid #444;
    }

    .custom {
        gap: 5px;
        height: 33px;
        margin-bottom: -8px;
        padding-bottom: 1px;
    }

    .custom input {
        width: 157px;
        height: 20px;
        padding: 0 3px;
        border: 1px solid #dde;
        border-top-color: #999;
        background: #fff;
    }

    .price {
        width: 129px;
    }

    .year {
        width: 30px;
    }

    /* editor */
    .editor {
        padding: 1px;
        border: 1px solid #ccc;
        border-color: #aaa #ccc #ccc #aaa;
        border-radius: 4px;
        background: #fff;
        line-height: normal;
    }

    .toolbar {
        padding: 1px 3px 0;
        border-bottom: 1px solid #ccc;
        background: #f0f0ee;
    }

    .tools {
        display: flex;
        align-items: center;
        height: 26px;
    }

    .tool {
        display: flex;
        flex: none;
        align-items: center;
        justify-content: center;
        width: 23px;
        height: 22px;
    }

    .tool > .icon {
        margin-left: 1px;
    }

    .tool.on {
        border: 1px solid #0a246a;
        background: #c2cbe0;
    }

    .sep {
        width: 1px;
        height: 15px;
        margin: 0 3px 0 4px;
        background: #999;
    }

    .letter {
        font-family: 'Liberation Serif', serif;
        font-size: 14px;
        font-weight: bold;
    }

    .abc {
        font-size: 9px;
    }

    .html {
        font-family: 'Liberation Sans', sans-serif;
        font-size: 7px;
        font-weight: bold;
        color: #1d4f8f;
    }

    .script {
        font-size: 12px;
        line-height: 12px;
    }

    .script sub, .script sup {
        font-size: 6px;
        line-height: 0;
        color: #2b5fc0;
    }

    .omega {
        font-family: 'Liberation Serif', serif;
        font-size: 18px;
        color: #2f62c5;
    }

    .tiny {
        font: bold 7px 'Liberation Sans', sans-serif;
        fill: #2b5fa8;
    }

    .format {
        width: 86px;
        height: 22px;
        margin: 0 1px;
        border: 1px solid #ccc;
        font-family: 'Open Sans', sans-serif;
        font-size: 11px;
    }

    .format select {
        padding-left: 3px;
    }

    .format::before {
        content: '';
        position: absolute;
        top: 0;
        right: 0;
        width: 10px;
        height: 20px;
        border-left: 1px solid #ccc;
        background: #eee;
        pointer-events: none;
    }

    .format::after {
        right: 2px;
        border-width: 3px 3px 0;
    }

    .colour {
        height: 18px;
        margin-right: 1px;
    }

    .colour b {
        width: 16px;
        border-bottom: 4px solid #888;
        font-family: 'Liberation Serif', serif;
        font-size: 16px;
        line-height: 14px;
        color: #2c5499;
    }

    .mark {
        align-items: flex-start;
        width: 16px;
        margin: 0 4px 0 5px;
        border-bottom: 4px solid #888;
        font-size: 9px;
        line-height: 10px;
    }

    .mark span {
        background: #fbea58;
    }

    .mark svg {
        flex: none;
        margin-left: -4px;
    }

    textarea {
        display: block;
        width: 100%;
        height: 100px;
        padding: 9px 28px 9px 9px;
        line-height: 14px;
        resize: none;
        overflow: hidden;
    }

    .path {
        height: 22px;
        padding: 0 3px;
        border-top: 1px solid #ccc;
        font-family: 'Liberation Sans', sans-serif;
        font-size: 12px;
        line-height: 22px;
        color: #000;
        background: #f0f0ee;
    }

    .upload {
        gap: 2px;
        height: 22px;
        margin-bottom: 1px;
    }

    .upload input {
        width: 116px;
        height: 20px;
        border: 1px solid #ddd;
        border-top: 2px solid #555;
        border-left: 2px solid #555;
        background: #fff;
    }

    .browse {
        width: 60px;
        height: 20px;
        border: 1px solid #707070;
        border-radius: 3px;
        font-family: 'Open Sans', sans-serif;
        line-height: 16px;
        background: linear-gradient(#f4f4f4, #ccc);
    }

    .more {
        margin-left: 21px;
    }

    /* bar that floats over the foot of the page */
    .dock {
        position: absolute;
        right: 14px;
        bottom: 0;
        left: 13px;
        display: flex;
        height: 33px;
        border: 1px solid #888;
        border-bottom: none;
        background: linear-gradient(rgba(230, 230, 230, .8), rgba(178, 178, 178, .85));
    }

    .dock button {
        position: relative;
        display: flex;
        align-items: center;
        justify-content: center;
        width: 29px;
        height: 26px;
        margin-top: 2px;
        border-right: 1px solid #aaa;
    }

    .dock .who {
        gap: 4px;
        width: 57px;
        font-size: 12px;
        font-weight: bold;
        color: #222;
    }

    .dock-icons {
        display: flex;
        margin-left: auto;
        border-left: 1px solid #aaa;
        border-image: linear-gradient(#aaa 28px, transparent 28px) 1;
    }

    .dock-icons button:last-child {
        width: 27px;
        border-right: none;
    }

    .count {
        position: absolute;
        top: 0;
        left: 6px;
        width: 20px;
        border: 1px solid #a8220c;
        border-radius: 2px;
        font-size: 9px;
        line-height: 11px;
        text-align: center;
        color: #fff;
        background: #e0452a;
    }

    .scrollbar {
        display: flex;
        flex-direction: column;
        flex: none;
        width: 16px;
        background: #f0f0f0;
    }

    .scrollbar button {
        display: flex;
        align-items: center;
        justify-content: center;
        height: 18px;
    }

    .track {
        flex: 1;
    }

    .thumb {
        display: flex;
        align-items: center;
        justify-content: center;
        height: 70%;
        border: 1px solid #888;
        border-radius: 2px;
        background: linear-gradient(90deg, #f6f6f6, #dcdcdc 45%, #bbb 75%, #ccc);
    }

    .thumb::before {
        content: '';
        width: 6px;
        height: 7px;
        background: repeating-linear-gradient(#555 0 1px, transparent 1px 3px);
    }

    .addons {
        display: flex;
        flex: none;
        align-items: center;
        height: 19px;
        padding: 0 5px 0 3px;
        border-top: 1px solid #b4c0d2;
        background: #cfdaec;
    }

    .script-block {
        width: 16px;
        height: 16px;
        border: 1px solid #000;
        font: bold 14px/14px 'Liberation Sans', sans-serif;
        color: #fff;
        background: #fff;
        -webkit-text-stroke: 1px #777;
    }

    .close {
        margin-left: 11px;
        line-height: 0;
    }

    .seo {
        margin-left: auto;
    }
</style>
